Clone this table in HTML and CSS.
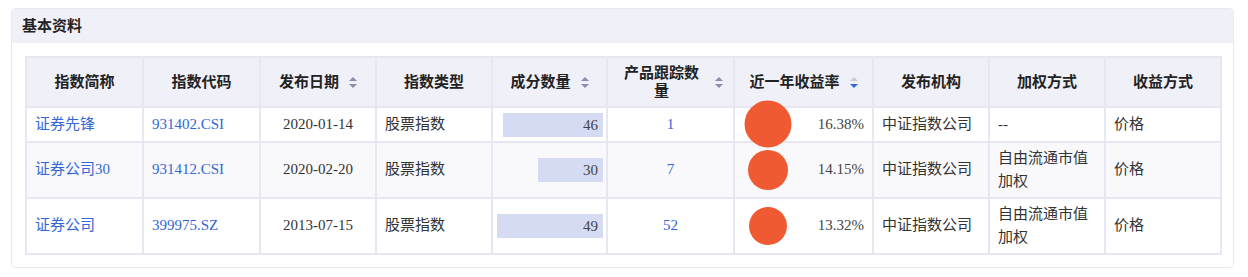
FILE: index.html
```html
<!DOCTYPE html>
<html lang="zh-CN">
<head>
<meta charset="utf-8">
<title>基本资料</title>
<link rel="stylesheet" href="styles.css">
</head>
<body>
<div class="panel">
  <div class="panel-head">基本资料</div>
  <div class="panel-body">
    <table class="grid">
      <colgroup>
        <col class="c1"><col class="c2"><col class="c3"><col class="c4"><col class="c5">
        <col class="c6"><col class="c7"><col class="c8"><col class="c9"><col class="c10">
      </colgroup>
      <thead>
        <tr>
          <th><div class="th-in"><span class="th-text">指数简称</span></div></th>
          <th><div class="th-in"><span class="th-text">指数代码</span></div></th>
          <th><div class="th-in"><span class="th-text">发布日期</span><span class="sort"><i class="up"></i><i class="down"></i></span></div></th>
          <th><div class="th-in"><span class="th-text">指数类型</span></div></th>
          <th><div class="th-in"><span class="th-text">成分数量</span><span class="sort"><i class="up"></i><i class="down"></i></span></div></th>
          <th><div class="th-in"><span class="th-text">产品跟踪数量</span><span class="sort"><i class="up"></i><i class="down"></i></span></div></th>
          <th><div class="th-in"><span class="th-text">近一年收益率</span><span class="sort active"><i class="up"></i><i class="down"></i></span></div></th>
          <th><div class="th-in"><span class="th-text">发布机构</span></div></th>
          <th><div class="th-in"><span class="th-text">加权方式</span></div></th>
          <th><div class="th-in"><span class="th-text">收益方式</span></div></th>
        </tr>
      </thead>
      <tbody>
        <tr>
          <td><a class="link">证券先锋</a></td>
          <td><a class="link">931402.CSI</a></td>
          <td class="center">2020-01-14</td>
          <td>股票指数</td>
          <td class="bar-cell"><span class="bar" style="width:100px">46</span></td>
          <td class="center"><a class="link">1</a></td>
          <td class="bubble-cell"><span class="bubble" style="width:47px;height:47px"></span>16.38%</td>
          <td>中证指数公司</td>
          <td>--</td>
          <td>价格</td>
        </tr>
        <tr class="alt">
          <td><a class="link">证券公司30</a></td>
          <td><a class="link">931412.CSI</a></td>
          <td class="center">2020-02-20</td>
          <td>股票指数</td>
          <td class="bar-cell"><span class="bar" style="width:65px">30</span></td>
          <td class="center"><a class="link">7</a></td>
          <td class="bubble-cell"><span class="bubble" style="width:40px;height:40px"></span>14.15%</td>
          <td>中证指数公司</td>
          <td>自由流通市值加权</td>
          <td>价格</td>
        </tr>
        <tr>
          <td><a class="link">证券公司</a></td>
          <td><a class="link">399975.SZ</a></td>
          <td class="center">2013-07-15</td>
          <td>股票指数</td>
          <td class="bar-cell"><span class="bar" style="width:106px">49</span></td>
          <td class="center"><a class="link">52</a></td>
          <td class="bubble-cell"><span class="bubble" style="width:38px;height:38px"></span>13.32%</td>
          <td>中证指数公司</td>
          <td>自由流通市值加权</td>
          <td>价格</td>
        </tr>
      </tbody>
    </table>
  </div>
</div>
</body>
</html>
```

FILE: styles.css
```css
html, body {
  margin: 0;
  padding: 0;
  background: #ffffff;
}

body {
  font-family: "Liberation Serif", "Noto Sans CJK SC", serif;
  font-size: 15px;
  color: #333;
}

.panel {
  margin: 8px 14px 0 11px;
  border: 1px solid #e9e9f3;
  border-radius: 4px;
  background: #fff;
}

.panel-head {
  height: 34px;
  line-height: 34px;
  padding-left: 10px;
  background: #f0f0f8;
  font-weight: bold;
  font-size: 15px;
  color: #222;
  border-radius: 4px 4px 0 0;
}

.panel-body {
  padding: 13px 13px 12px 13px;
}

.grid {
  width: 100%;
  border-collapse: collapse;
  table-layout: fixed;
  border: 2px solid #e7e7f3;
}

.c1 { width: 117px; }
.c2 { width: 117px; }
.c3 { width: 116px; }
.c4 { width: 116px; }
.c5 { width: 115px; }
.c6 { width: 127px; }
.c7 { width: 139px; }
.c8 { width: 116px; }
.c9 { width: 116px; }
.c10 { width: 116px; }

.grid th,
.grid td {
  border: 2px solid #e7e7f3;
}

.grid th {
  background: #f0f0f8;
  padding: 6px 10px;
  line-height: 18px;
  font-weight: bold;
  color: #222;
}

.th-in {
  display: flex;
  align-items: center;
  justify-content: center;
  gap: 10px;
}

.th-text {
  text-align: center;
}

.sort {
  flex: none;
  display: inline-flex;
  flex-direction: column;
  gap: 3px;
}

.sort i {
  display: block;
  width: 0;
  height: 0;
  border-left: 4px solid transparent;
  border-right: 4px solid transparent;
}

.sort .up {
  border-bottom: 4px solid #8c8cae;
}

.sort .down {
  border-top: 4px solid #8c8cae;
}

.sort.active .up {
  border-bottom-color: #c9c9d9;
}

.sort.active .down {
  border-top-color: #2b6be2;
}

.grid td {
  padding: 4px 8px;
  line-height: 23px;
  text-align: left;
  vertical-align: middle;
  background: #fff;
}

.grid tr.alt td {
  background: #f9f9fc;
}

.grid td.center {
  text-align: center;
}

.link {
  color: #3366d6;
  text-decoration: none;
}

.grid td.bar-cell {
  padding-left: 2px;
  padding-right: 3px;
  text-align: right;
}

.bar {
  display: inline-block;
  box-sizing: border-box;
  height: 24px;
  line-height: 24px;
  padding-right: 5px;
  background: #d5dbf3;
  text-align: right;
  vertical-align: middle;
  color: #444;
}

.grid td.bubble-cell {
  position: relative;
  text-align: right;
  color: #444;
}

.bubble {
  position: absolute;
  left: 33px;
  top: 50%;
  transform: translate(-50%, -50%);
  border-radius: 50%;
  background: #f05a33;
  z-index: 2;
}
```
